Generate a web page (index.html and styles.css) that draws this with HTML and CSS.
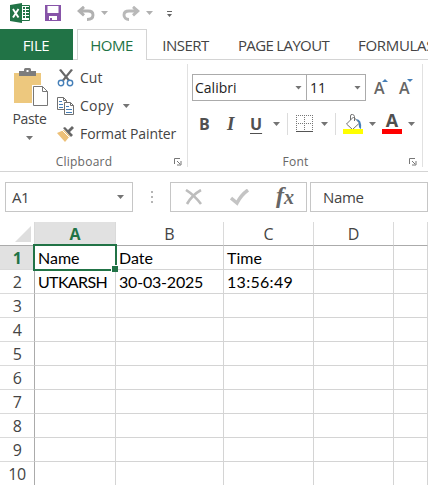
FILE: index.html
```html
<!DOCTYPE html>
<html lang="en">
<head>
<meta charset="utf-8">
<title>Workbook</title>
<link rel="stylesheet" href="styles.css">
</head>
<body>
<div class="app">
  <header class="quickbar">
    <svg class="logo" width="21" height="20" viewBox="0 0 21 20"><path fill="#fff" stroke="#217346" d="M11 2.5h8.500v15H11z"/><path stroke="#217346" stroke-width="2" d="M13 5h2m1 0h3m-6 3h2m1 0h3m-6 3h2m1 0h3m-6 3h2m1 0h3"/><path fill="#217346" d="M0 2 12 0v20L0 18z"/><path stroke="#fff" stroke-width="1.900" d="m3 6 5.500 8.500m0-8.500L3 14.500"/></svg>
    <svg class="save" width="16" height="16" viewBox="0 0 16 16"><path fill="#8754a8" d="M0 0h16v16H0z"/><path fill="#fff" d="M2.500 1h11v7h-11zM4 11h8v4H7v-2H5v2H4z"/></svg>
    <svg class="undo" width="18" height="15" viewBox="0 0 18 15"><path fill="none" stroke="#b1b1b1" stroke-width="2.900" d="M2 5h9c3 0 5 1.500 5 4s-2 4.500-6 4.500M7 .8 2.200 5 7 9.300"/></svg>
    <i class="caret light"></i>
    <svg class="redo" width="18" height="15" viewBox="0 0 18 15"><path fill="none" stroke="#b9b9b9" stroke-width="2.900" d="M16 5H7C4 5 2 6.500 2 9s2 4.500 5 4.500M11 .8 15.800 5 11 9.300"/></svg>
    <i class="caret light"></i>
    <svg class="more" width="5" height="7" viewBox="0 0 5 7"><path fill="#666" d="M0 0h5v1H0zM0 3h5L2.500 6z"/></svg>
  </header>
  <nav class="tabs">
    <div class="tab file"><span>FILE</span></div>
    <div class="tab home"><span>HOME</span></div>
    <div class="tab insert"><span>INSERT</span></div>
    <div class="tab layout"><span>PAGE LAYOUT</span></div>
    <div class="tab formulas"><span>FORMULAS</span></div>
  </nav>
  <section class="ribbon">
    <div class="group clipboard">
      <div class="clip-body">
        <div class="paste">
          <svg width="36" height="40" viewBox="0 0 36 40"><path fill="#edc87e" d="M0 5h27v30H0z"/><path fill="#7d7d7d" d="M5 3h5V1.500Q10 0 11.500 0h4Q17 0 17 1.500V3h5v5H5z"/><path fill="#fff" d="M12.500 2h2v2h-2z"/><path fill="#fff" stroke="#fff" stroke-width="3" d="M19.500 18.500h9l5 5v14h-14z"/><path fill="#fff" stroke="#777" d="M19.500 18.500h9l5 5v14h-14zM28.500 18.500v5h5"/></svg>
          <span>Paste</span>
          <i class="caret"></i>
        </div>
        <div class="actions">
          <div class="action cut"><svg width="18" height="18" viewBox="0 0 18 18"><path fill="#686868" d="m2 1 2-1 9 11-2 1zM14 0l2 1-9 11-2-1z"/><g fill="#fff" stroke="#457fb8" stroke-width="1.400"><circle cx="4" cy="14" r="2.700"/><circle cx="13" cy="14" r="2.700"/></g></svg><span>Cut</span></div>
          <div class="action copy"><svg width="18" height="18" viewBox="0 0 18 18"><g fill="#fff" stroke="#707070"><path d="M.5.500h6l3 3v9h-9zM6.500.500v3h3"/><path d="M7.500 5.500h6l3 3v9h-9zM13.500 5.500v3h3"/></g><path stroke="#457fb8" d="M2 4.500h3m-3 3h4m-4 3h4m3-1h3m-3 3h6m-6 3h6"/></svg><span>Copy</span><i class="caret"></i></div>
          <div class="action painter"><svg width="18" height="17" viewBox="0 0 18 17"><path fill="#edc078" d="m0 7 7-3 6 6-5 6z"/><path fill="#666" d="m6 2 2-1 3 3 4-4 2 2-4 4 3 3-2 2z"/><path stroke="#fff" d="m5 4 8 8"/></svg><span>Format Painter</span></div>
        </div>
      </div>
      <div class="caption"><span>Clipboard</span><svg class="launcher" width="8" height="8" viewBox="0 0 8 8"><path fill="none" stroke="#777" d="M.5 6V.500H6M3 3l3 3M7 3v4H3"/></svg></div>
    </div>
    <div class="group font">
      <div class="font-fields">
        <div class="field family"><span>Calibri</span><i class="caret"></i></div>
        <div class="field size"><span>11</span><i class="caret"></i></div>
        <div class="resize grow"><span>A</span><svg width="6" height="3"><path fill="#457fb8" d="M0 3 3 0l3 3z"/></svg></div>
        <div class="resize shrink"><span>A</span><svg width="6" height="3"><path fill="#457fb8" d="M0 0h6L3 3z"/></svg></div>
      </div>
      <div class="font-tools">
        <b class="bold">B</b>
        <b class="italic">I</b>
        <b class="underline">U</b>
        <i class="caret"></i>
        <i class="rule r1"></i>
        <svg class="borders" width="17" height="18" viewBox="0 0 17 18"><path fill="none" stroke="#777" stroke-dasharray="1 1" d="M0 .5h17M.5 0v16M8.500 0v16M16.500 0v16M0 8.500h17"/><path stroke="#555" d="M0 16.500h17"/></svg>
        <i class="caret"></i>
        <i class="rule r2"></i>
        <svg class="fill" width="20" height="20" viewBox="0 0 20 20"><path fill="#fff" stroke="#707070" d="m3.500 10 7-7 6 6-7 6.500zM7.500 6V2q0-2 2-1.500t2 2V7"/><path fill="#457fb8" d="M13 5q6 0 5 10-3-1-2-6z"/><path fill="#ff0" d="M0 15h20v5H0z"/></svg>
        <i class="caret"></i>
        <div class="color"><b>A</b></div>
        <i class="caret"></i>
      </div>
      <div class="caption"><span>Font</span><svg class="launcher" width="8" height="8" viewBox="0 0 8 8"><path fill="none" stroke="#777" d="M.5 6V.500H6M3 3l3 3M7 3v4H3"/></svg></div>
    </div>
  </section>
  <section class="formula">
    <div class="namebox"><span>A1</span><i class="caret"></i></div>
    <div class="grip"><i></i><i></i><i></i></div>
    <div class="buttons">
      <svg width="18" height="16" viewBox="0 0 18 16"><path fill="none" stroke="#bdbdbd" stroke-width="2.600" d="M1 1q8 5 15 14M16 1Q7 6 2 15"/></svg>
      <svg width="20" height="17" viewBox="0 0 20 17"><path fill="none" stroke="#c4c4c4" stroke-width="3.500" d="m1 9 6 5Q11 6 18 1"/></svg>
      <span class="fx"><b>f</b><b>x</b></span>
    </div>
    <div class="input"><span>Name</span></div>
  </section>
  <main class="sheet">
    <div class="corner"><svg width="16" height="16"><path fill="#dedede" d="M16 0v16H0z"/></svg></div>
    <div class="col active">A</div><div class="col">B</div><div class="col">C</div><div class="col">D</div><div class="col"></div>
    <div class="row active">1</div><div class="cell selected"><span>Name</span></div><div class="cell"><span>Date</span></div><div class="cell"><span>Time</span></div><div class="cell"></div><div class="cell"></div>
    <div class="row">2</div><div class="cell"><span class="upper">UTKARSH</span></div><div class="cell"><span class="date">30-03-2025</span></div><div class="cell"><span class="time">13:56:49</span></div><div class="cell"></div><div class="cell"></div>
    <div class="row">3</div><div class="cell"></div><div class="cell"></div><div class="cell"></div><div class="cell"></div><div class="cell"></div>
    <div class="row">4</div><div class="cell"></div><div class="cell"></div><div class="cell"></div><div class="cell"></div><div class="cell"></div>
    <div class="row">5</div><div class="cell"></div><div class="cell"></div><div class="cell"></div><div class="cell"></div><div class="cell"></div>
    <div class="row">6</div><div class="cell"></div><div class="cell"></div><div class="cell"></div><div class="cell"></div><div class="cell"></div>
    <div class="row">7</div><div class="cell"></div><div class="cell"></div><div class="cell"></div><div class="cell"></div><div class="cell"></div>
    <div class="row">8</div><div class="cell"></div><div class="cell"></div><div class="cell"></div><div class="cell"></div><div class="cell"></div>
    <div class="row">9</div><div class="cell"></div><div class="cell"></div><div class="cell"></div><div class="cell"></div><div class="cell"></div>
    <div class="row">10</div><div class="cell"></div><div class="cell"></div><div class="cell"></div><div class="cell"></div><div class="cell"></div>
  </main>
</div>
</body>
</html>
```
FILE: styles.css
```css
* { box-sizing: border-box; }
body { margin: 0; background: #fff; font-family: "Open Sans", "Noto Sans", sans-serif; font-size: 14px; color: #444; }
.app { width: 428px; height: 485px; overflow: hidden; }
svg { display: block; flex: none; }
span { white-space: nowrap; }
.caret { flex: none; width: 7px; height: 4px; background: #747474; clip-path: polygon(0 0, 100% 0, 50% 100%); }
.caret.light { background: #b0b0b0; }

.quickbar { height: 29px; display: flex; align-items: center; padding: 0 0 3px 10px; }
.save { margin-left: 14px; }
.undo { margin: 1px 6px 0 16px; }
.redo { margin: 1px 6px 0 14px; }
.more { margin: 3px 0 0 14px; }

.tabs { height: 31px; display: flex; border-bottom: 1px solid #d4d4d4; }
.tab { height: 31px; flex: none; display: flex; align-items: center; justify-content: center; font-size: 15px; }
.tab.file { width: 73px; background: #217346; color: #fff; letter-spacing: -.4px; padding-right: 1px; }
.tab.home { width: 70px; margin-left: 4px; border: 1px solid #d4d4d4; border-bottom: 0; background: #fff; color: #217346; letter-spacing: -.5px; padding-right: 1px; }
.tab.insert { margin-left: 15px; width: 47px; letter-spacing: -.5px; }
.tab.layout { margin-left: 29px; width: 91px; letter-spacing: -.65px; }
.tab.formulas { margin-left: 29px; justify-content: flex-start; letter-spacing: -.3px; }

.ribbon { height: 112px; display: flex; border-bottom: 1px solid #d4d4d4; padding-top: 4px; }
.group { height: 103px; border-right: 1px solid #e1e1e1; display: flex; flex-direction: column; flex: none; }
.clipboard { width: 188px; }
.font { width: 235px; }
.clip-body { display: flex; height: 86px; }
.paste { width: 57px; display: flex; flex-direction: column; align-items: center; padding: 4px 0 0 2px; }
.paste svg { margin-left: 5px; }
.paste span { line-height: 20px; margin-top: 1px; letter-spacing: -.3px; }
.paste .caret { margin-top: 7px; }
.action { display: flex; align-items: center; height: 28px; }
.action span { position: relative; top: -1px; }
.actions .action svg { margin-right: 5px; }
.painter span { letter-spacing: -.1px; }
.copy span { letter-spacing: .25px; }
.copy .caret { margin-left: 9px; }
.caption { height: 17px; display: flex; align-items: center; justify-content: center; position: relative; font-size: 12px; letter-spacing: .25px; color: #666; line-height: 16px; padding-top: 6px; }
.clipboard .caption { padding-right: 19px; }
.font .caption { padding-right: 19px; }
.launcher { position: absolute; right: 5px; top: 8px; }

.font-fields { display: flex; height: 39px; padding: 10px 0 0 4px; }
.field { height: 27px; border: 1px solid #ababab; display: flex; align-items: center; justify-content: space-between; padding: 0 4px 0 2px; color: #222; flex: none; }
.family { width: 115px; }
.size { width: 60px; margin-left: -1px; padding-left: 3px; }
.resize { display: flex; font-size: 16px; font-weight: 600; line-height: 28px; color: #666; margin-left: 8px; width: 17px; }
.resize svg { margin-top: 5px; margin-left: -3px; }
.font-tools { display: flex; align-items: center; height: 47px; padding: 0 0 5px 11px; }
.font-tools > * { flex: none; }
.font-tools b { font-size: 16px; color: #505050; }
.bold { width: 28px; }
.font-tools .italic { font-family: "Liberation Serif", serif; font-style: italic; width: 23px; font-size: 19px; }
.underline { width: 23px; text-decoration: underline; text-decoration-thickness: 1px; text-underline-offset: 3px; }
.rule { width: 1px; height: 22px; background: #dcdcdc; margin-left: 7px; }
.borders { margin: 0 8px 0 8px; }
.fill { margin: 0 6px 0 7px; }
.font-tools .color { width: 20px; height: 20px; border-bottom: 5px solid #f00; margin: 0 6px 0 6px; text-align: center; line-height: 13px; }
.font-tools .color b { font-size: 18px; }

.formula { height: 50px; padding-top: 10px; display: flex; }
.formula > .namebox, .buttons, .input { height: 30px; border: 1px solid #c6c6c6; display: flex; align-items: center; flex: none; }
.namebox { width: 128px; margin-left: 5px; padding: 0 8px 0 6px; justify-content: space-between; font-size: 15px; letter-spacing: -.4px; }
.grip { width: 37px; height: 30px; display: flex; flex-direction: column; align-items: center; justify-content: center; gap: 3px; }
.grip i { width: 2px; height: 2px; background: #b5b5b5; }
.buttons { width: 137px; padding-left: 14px; gap: 27px; }
.formula .buttons { margin-left: 0; }
.fx { display: flex; width: 24px; margin-left: -1px; font-family: "Liberation Serif", serif; font-style: italic; font-size: 24px; line-height: 27px; color: #666; }
.fx b + b { font-size: 20px; line-height: 31px; }
.input { width: 118px; margin-left: 3px; padding-left: 12px; font-size: 15px; letter-spacing: -.3px; }

.formula .grip { width: 38px; }

.sheet { display: grid; grid-template-columns: 35px 81px 108px 90px 80px 34px; grid-template-rows: 24px repeat(10, 24px); font-size: 16px; }
.corner, .col { border-bottom: 1px solid #ababab; }
.corner { border-right: 1px solid #dadada; padding: 4px 0 0 15px; }
.col { display: flex; align-items: center; justify-content: center; border-right: 1px solid #dadada; }
.row { display: flex; align-items: center; justify-content: center; border-right: 1px solid #ababab; border-bottom: 1px solid #dadada; letter-spacing: -.4px; }
.col.active, .row.active { background: #e1e1e1; color: #217346; font-weight: 700; }
.cell { border-right: 1px solid #d4d4d4; border-bottom: 1px solid #d4d4d4; display: flex; align-items: center; padding: 0 0 1px 3px; font-family: Lato, sans-serif; font-size: 16px; color: #000; }
.upper { letter-spacing: -.65px; }
.date { letter-spacing: -.2px; }
.time { letter-spacing: .3px; }
.selected { position: relative; }
.selected::before { content: ""; position: absolute; inset: -2px; border: 2px solid #217346; }
.selected::after { content: ""; position: absolute; right: -3px; bottom: -3px; width: 6px; height: 6px; background: #217346; border: solid #fff; border-width: 1px 0 0 1px; }
```
